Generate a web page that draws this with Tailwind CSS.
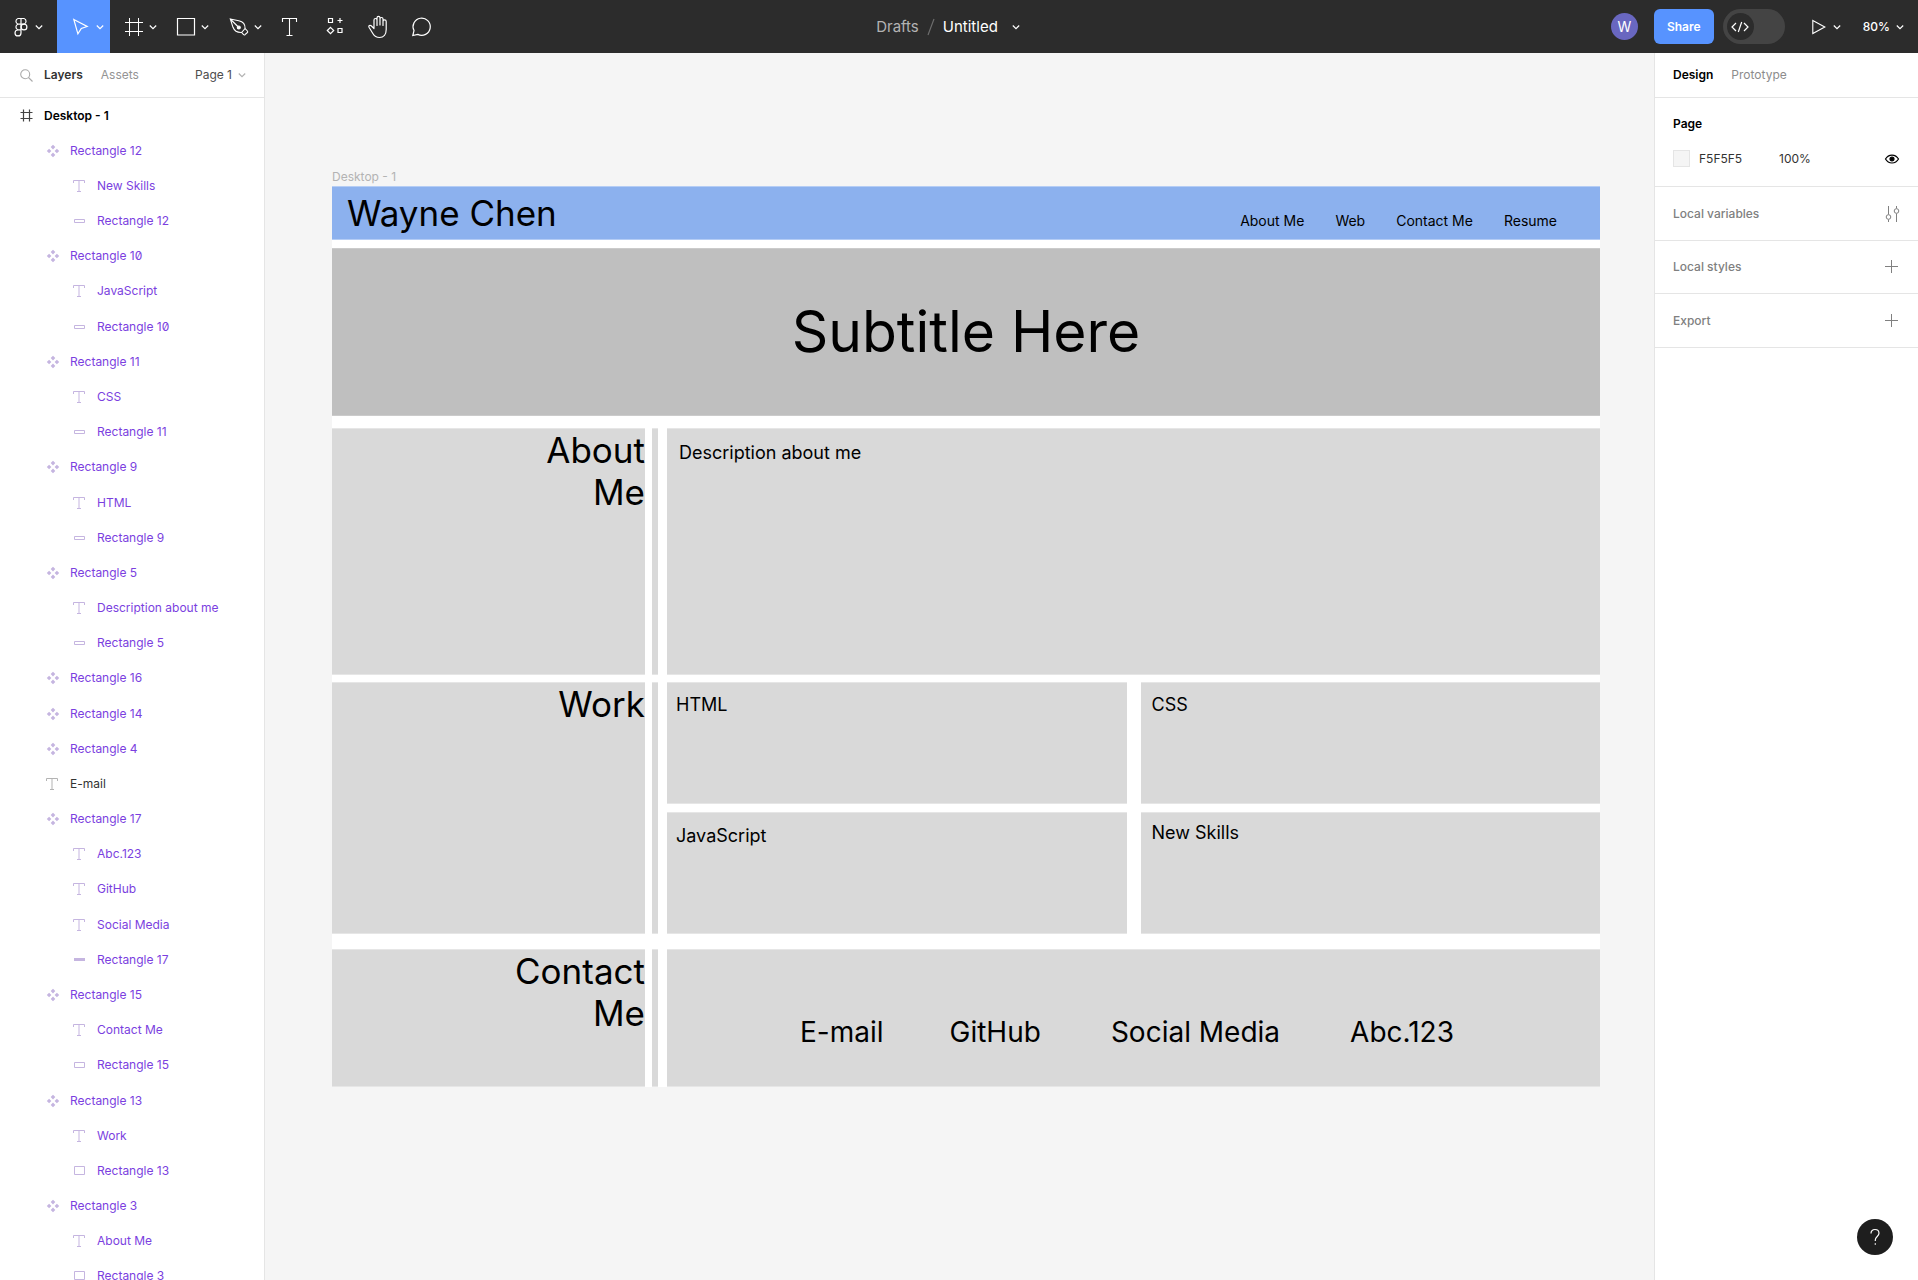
<!DOCTYPE html>
<html lang="en">
<head>
<meta charset="utf-8">
<meta name="viewport" content="width=device-width, initial-scale=1">
<title>Untitled – Drafts</title>
<script src="https://cdn.jsdelivr.net/npm/@tailwindcss/browser@4"></script>
</head>
<body class="flex h-screen flex-col overflow-hidden bg-[#f5f5f5] font-['Inter',sans-serif] text-xs leading-4 text-[#333]">

<!-- Shared icon shapes -->
<svg class="hidden" aria-hidden="true">
  <symbol id="chev" viewBox="0 0 8 8"><path d="M.8 2.500 4 5.600l3.200-3.100" fill="none" stroke="currentColor" stroke-width="1.200"/></symbol>
  <symbol id="comp" viewBox="0 0 14 14"><path d="M7 .8 9.300 3.100 7 5.400 4.700 3.100zM7 8.600l2.300 2.300L7 13.200l-2.300-2.300zM3.100 4.700 5.400 7 3.100 9.300.8 7zM10.900 4.700 13.200 7l-2.300 2.300L8.600 7z" fill="currentColor"/></symbol>
  <symbol id="text" viewBox="0 0 14 14"><path d="M.5 4V1.500h11V4M6 1.500v11M4 12.500h4" fill="none" stroke="currentColor" stroke-width="1"/></symbol>
  <symbol id="bar" viewBox="0 0 14 14"><path d="M1.500 5.500h10v3h-10z" fill="none" stroke="currentColor"/></symbol>
  <symbol id="line" viewBox="0 0 14 14"><path d="M1 5h11v3H1z" fill="currentColor"/></symbol>
  <symbol id="wide" viewBox="0 0 14 14"><path d="M1.500 4.500h10v5h-10z" fill="none" stroke="currentColor"/></symbol>
  <symbol id="box" viewBox="0 0 14 14"><path d="M1.500 2.500h10v8h-10z" fill="none" stroke="currentColor"/></symbol>
  <symbol id="plus" viewBox="0 0 14 14"><path d="M6.500 0v13M0 6.500h13" fill="none" stroke="currentColor"/></symbol>
</svg>

<header class="grid h-[53px] shrink-0 grid-cols-[1fr_auto_1fr] items-center bg-[#2c2c2c] text-white">
  <nav class="flex h-[53px]" aria-label="Tools">
    <button class="flex w-[57px] items-center justify-end gap-[2px] pr-[14px]" aria-label="Main menu">
      <svg class="size-6" viewBox="0 0 24 24" fill="none" stroke="currentColor" stroke-width="1.200"><path d="M12 3.500H9a3 3 0 0 0 0 5.700h3zM12 3.500h3a3 3 0 0 1 0 5.700h-3zM12 9.200H9a3 3 0 0 0 0 5.700h3zM12 14.900H9a3 3 0 1 0 3 3z"/><circle cx="15" cy="12" r="2.900"/></svg>
      <svg class="size-2"><use href="#chev"/></svg>
    </button>
    <button class="flex w-[53px] items-center justify-end gap-[3px] bg-[#5793ff] pr-[6px]" aria-label="Move">
      <svg class="size-6" viewBox="0 0 24 24" fill="none" stroke="currentColor" stroke-width="1.200"><path d="m4.800 4.500 13.400 7-5.900 2-3.400 5.300z"/></svg>
      <svg class="size-2"><use href="#chev"/></svg>
    </button>
    <button class="flex w-[53px] items-center justify-end gap-[3px] pr-[6px]" aria-label="Frame">
      <svg class="size-6" viewBox="0 0 24 24" fill="none" stroke="currentColor"><path d="M7.500 3v18M16.500 3v18M3 7.500h18M3 16.500h18"/></svg>
      <svg class="size-2"><use href="#chev"/></svg>
    </button>
    <button class="flex w-[53px] items-center justify-end gap-[3px] pr-[7px]" aria-label="Rectangle">
      <svg class="size-6" viewBox="0 0 24 24" fill="none" stroke="currentColor" stroke-width="1.200"><path d="M3.500 3.500h17v16.500h-17z"/></svg>
      <svg class="size-2"><use href="#chev"/></svg>
    </button>
    <button class="flex w-[53px] items-center justify-end gap-[3px] pr-[7px]" aria-label="Pen">
      <svg class="size-6" viewBox="0 0 24 24" fill="none" stroke="currentColor" stroke-width="1.100"><path d="m3.300 4 8.500 1.800c4 .9 6.500 3.800 6.300 7.700l2.300 2.500c.5.600.5 1 0 1.500L18 19.700c-.5.400-1 .4-1.400 0l-2-2.200c-4 .2-7.200-1.500-8.600-5.200zM3.300 4l7.500 7.500"/><circle cx="11.800" cy="12.500" r="1.500" fill="currentColor"/><path d="m14.600 17.500 3.500-4"/></svg>
      <svg class="size-2"><use href="#chev"/></svg>
    </button>
    <button class="flex w-11 items-center justify-center" aria-label="Text">
      <svg class="size-6" viewBox="0 0 24 24" fill="none" stroke="currentColor" stroke-width="1.100"><path d="M3.500 7V3.500h14V7M10.500 3.500v17M7.500 20.500h6"/></svg>
    </button>
    <button class="flex w-11 items-center justify-center" aria-label="Resources">
      <svg class="size-6" viewBox="0 0 24 24" fill="none" stroke="currentColor" stroke-width="1.200"><path d="M5.500 3.500h4v4h-4zM15 13.500h4v4h-4zM17 3v5M14.500 5.500h5M7.500 12.300l3.200 3.200-3.200 3.200-3.200-3.200z"/></svg>
    </button>
    <button class="flex w-11 items-center justify-center" aria-label="Hand tool">
      <svg class="size-6" viewBox="0 0 24 24" fill="none" stroke="currentColor" stroke-width="1.200" stroke-linecap="round" stroke-linejoin="round"><path d="M7 12.800V5a1.500 1.500 0 0 1 3 0v5.500M10 10V2.900a1.500 1.500 0 0 1 3 0V10M13 4a1.500 1.500 0 0 1 3 0v6.500M16 6.500a1.600 1.600 0 0 1 3.200 0v8c0 4.700-2.500 8-6.700 8-3 0-5-1-6.500-3.700l-4-6.500c-.8-1.500 1-2.600 2.200-1.500L7 13.500"/></svg>
    </button>
    <button class="flex w-11 items-center justify-center" aria-label="Comment">
      <svg class="size-6" viewBox="0 0 24 24" fill="none" stroke="currentColor" stroke-width="1.200"><path d="M1.800 20.500 3 15.600a8.600 8.600 0 1 1 3.800 3.800z"/></svg>
    </button>
  </nav>

  <div class="flex items-center pr-[22px] text-[15px] leading-5">
    <a href="#" class="text-[#b3b3b3]">Drafts</a>
    <svg class="mx-2 h-5 w-2" viewBox="0 0 8 20" fill="none" stroke="#6e6e6e" stroke-width="1.200"><path d="M7 2 1 18"/></svg>
    <button class="flex items-center gap-[14px]"><span>Untitled</span><svg class="size-2"><use href="#chev"/></svg></button>
  </div>

  <div class="flex items-center justify-end pr-[14px]">
    <span class="flex size-[27px] items-center justify-center rounded-full bg-[#6967c0] text-[14px]">W</span>
    <button class="ml-4 h-[35px] w-[60px] rounded-md bg-[#5793ff] font-semibold">Share</button>
    <button class="ml-[9px] flex h-[35px] w-[62px] items-center rounded-full bg-[#444] pl-1" role="switch" aria-checked="false" aria-label="Dev Mode">
      <span class="flex size-[27px] items-center justify-center rounded-full bg-[#2c2c2c]"><svg class="h-3 w-[18px]" viewBox="0 0 18 12" fill="none" stroke="currentColor" stroke-width="1.200"><path d="M5 2 1 6l4 4M13 2l4 4-4 4M10.700 1 7.300 11"/></svg></span>
    </button>
    <button class="ml-[27px] flex items-center gap-[7px]" aria-label="Present">
      <svg class="h-4 w-[14px]" viewBox="0 0 14 16" fill="none" stroke="currentColor" stroke-width="1.100"><path d="M.8 1.500 12.800 8 .8 14.500z"/></svg>
      <svg class="size-2"><use href="#chev"/></svg>
    </button>
    <button class="ml-[22px] flex items-center gap-[6px] font-medium"><span>80%</span><svg class="size-2"><use href="#chev"/></svg></button>
  </div>
</header>

<div class="flex min-h-0 flex-1">
  <aside class="flex w-[265px] shrink-0 flex-col border-r border-[#e5e5e5] bg-white">
    <div class="flex h-[45px] shrink-0 items-center border-b border-[#e5e5e5] pr-[18px] pl-5">
      <svg class="mr-[11px] size-[13px] text-[#aaa]" viewBox="0 0 13 13" fill="none" stroke="currentColor" stroke-width="1.100"><circle cx="5.200" cy="5.200" r="4.500"/><path d="m8.500 8.500 4 4"/></svg>
      <button class="font-semibold">Layers</button>
      <button class="ml-[18px] text-[#949494]">Assets</button>
      <button class="ml-auto flex items-center gap-[6px] text-[#4d4d4d]"><span>Page 1</span><svg class="size-2 text-[#b3b3b3]"><use href="#chev"/></svg></button>
    </div>
    <ul class="-mb-[14px] grid flex-1 auto-rows-fr text-[#7b3fe0] slashed-zero [&_svg]:size-[14px] [&_svg]:shrink-0 [&_svg]:text-[#c5b5e0] [&>li]:flex [&>li]:items-center [&>li]:gap-[10px]">
      <li class="pl-5 font-semibold text-black"><svg class="!text-[#444]" viewBox="0 0 14 14" fill="none" stroke="currentColor" stroke-width="1.200"><path d="M3.500.5v12M9.500.5v12M.5 3.500h12M.5 9.500h12"/></svg>Desktop - 1</li>
      <li class="pl-[46px]"><svg><use href="#comp"/></svg>Rectangle 12</li>
      <li class="pl-[73px]"><svg><use href="#text"/></svg>New Skills</li>
      <li class="pl-[73px]"><svg><use href="#bar"/></svg>Rectangle 12</li>
      <li class="pl-[46px]"><svg><use href="#comp"/></svg>Rectangle 10</li>
      <li class="pl-[73px]"><svg><use href="#text"/></svg>JavaScript</li>
      <li class="pl-[73px]"><svg><use href="#bar"/></svg>Rectangle 10</li>
      <li class="pl-[46px]"><svg><use href="#comp"/></svg>Rectangle 11</li>
      <li class="pl-[73px]"><svg><use href="#text"/></svg>CSS</li>
      <li class="pl-[73px]"><svg><use href="#bar"/></svg>Rectangle 11</li>
      <li class="pl-[46px]"><svg><use href="#comp"/></svg>Rectangle 9</li>
      <li class="pl-[73px]"><svg><use href="#text"/></svg>HTML</li>
      <li class="pl-[73px]"><svg><use href="#bar"/></svg>Rectangle 9</li>
      <li class="pl-[46px]"><svg><use href="#comp"/></svg>Rectangle 5</li>
      <li class="pl-[73px]"><svg><use href="#text"/></svg>Description about me</li>
      <li class="pl-[73px]"><svg><use href="#bar"/></svg>Rectangle 5</li>
      <li class="pl-[46px]"><svg><use href="#comp"/></svg>Rectangle 16</li>
      <li class="pl-[46px]"><svg><use href="#comp"/></svg>Rectangle 14</li>
      <li class="pl-[46px]"><svg><use href="#comp"/></svg>Rectangle 4</li>
      <li class="pl-[46px] text-[#333]"><svg class="!text-[#b3b3b3]"><use href="#text"/></svg>E-mail</li>
      <li class="pl-[46px]"><svg><use href="#comp"/></svg>Rectangle 17</li>
      <li class="pl-[73px]"><svg><use href="#text"/></svg>Abc.123</li>
      <li class="pl-[73px]"><svg><use href="#text"/></svg>GitHub</li>
      <li class="pl-[73px]"><svg><use href="#text"/></svg>Social Media</li>
      <li class="pl-[73px]"><svg><use href="#line"/></svg>Rectangle 17</li>
      <li class="pl-[46px]"><svg><use href="#comp"/></svg>Rectangle 15</li>
      <li class="pl-[73px]"><svg><use href="#text"/></svg>Contact Me</li>
      <li class="pl-[73px]"><svg><use href="#wide"/></svg>Rectangle 15</li>
      <li class="pl-[46px]"><svg><use href="#comp"/></svg>Rectangle 13</li>
      <li class="pl-[73px]"><svg><use href="#text"/></svg>Work</li>
      <li class="pl-[73px]"><svg><use href="#box"/></svg>Rectangle 13</li>
      <li class="pl-[46px]"><svg><use href="#comp"/></svg>Rectangle 3</li>
      <li class="pl-[73px]"><svg><use href="#text"/></svg>About Me</li>
      <li class="pl-[73px]"><svg><use href="#box"/></svg>Rectangle 3</li>
    </ul>
  </aside>

  <main class="min-w-0 flex-1 pt-[116px] pr-[54px] pl-[67px] text-black">
    <p class="mb-px text-[#b3b3b3]">Desktop - 1</p>
    <!-- Artboard -->
    <article class="bg-white">
      <header class="flex h-[54px] items-center justify-between border-y border-[#b5cdf5] bg-[#8cb1ee] pr-[43px] pl-[15px]">
        <h1 class="text-[35px] leading-[42px]">Wayne Chen</h1>
        <nav class="flex gap-[31px] self-end pb-2 text-[14px] leading-5"><a href="#">About Me</a><a href="#">Web</a><a href="#">Contact Me</a><a href="#">Resume</a></nav>
      </header>
      <section class="mt-2 flex h-[168px] items-center justify-center border-y border-[#cbcbcb] bg-[#bfbfbf]">
        <h2 class="text-[57px] leading-[68px]">Subtitle Here</h2>
      </section>
      <section class="mt-3 flex h-[247px] [&>*]:border-y [&>*]:border-[#e6e6e6] [&>*]:bg-[#d9d9d9]">
        <h3 class="w-[313px] text-right text-[35px] leading-[42px]">About<br>Me</h3>
        <div class="mr-[9px] ml-[7px] w-[6px]"></div>
        <p class="flex-1 pt-[13px] pl-3 text-[18px] leading-[22px]">Description about me</p>
      </section>
      <section class="mt-[7px] flex h-[252px]">
        <h3 class="w-[313px] border-y border-[#e6e6e6] bg-[#d9d9d9] text-right text-[35px] leading-[42px]">Work</h3>
        <div class="mr-[9px] ml-[7px] w-[6px] border-y border-[#e6e6e6] bg-[#d9d9d9]"></div>
        <div class="grid flex-1 grid-cols-2 grid-rows-2 gap-x-[14px] gap-y-2 text-[18px] leading-[22px] [&>*]:border-y [&>*]:border-[#e6e6e6] [&>*]:bg-[#d9d9d9]">
          <p class="pt-[11px] pl-[9px]">HTML</p>
          <p class="pt-[11px] pl-[11px]">CSS</p>
          <p class="pt-3 pl-[9px]">JavaScript</p>
          <p class="pt-[9px] pl-[11px]">New Skills</p>
        </div>
      </section>
      <section class="mt-[15px] flex h-[138px] [&>*]:border-y [&>*]:border-[#e6e6e6] [&>*]:bg-[#d9d9d9]">
        <h3 class="w-[313px] text-right text-[35px] leading-[42px]">Contact<br>Me</h3>
        <div class="mr-[9px] ml-[7px] w-[6px]"></div>
        <div class="flex flex-1 gap-[70px] pt-[65px] pl-[133px] text-[28px] leading-[34px]"><a href="#" class="-mr-1">E-mail</a><a href="#">GitHub</a><a href="#">Social Media</a><a href="#">Abc.123</a></div>
      </section>
    </article>
  </main>

  <aside class="w-[264px] shrink-0 border-l border-[#e5e5e5] bg-white [&>*]:border-b [&>*]:border-[#e5e5e5] [&>*]:px-[18px]">
    <div class="flex h-[45px] items-center gap-[18px]"><button class="font-semibold text-black">Design</button><button class="text-[#8c8c8c]">Prototype</button></div>
    <section class="h-[89px] pt-[18px]">
      <h2 class="font-semibold text-black">Page</h2>
      <div class="mt-[18px] flex items-center">
        <button class="size-[17px] border border-[#e5e5e5] bg-[#f5f5f5]" aria-label="Page colour"></button>
        <input class="ml-[9px] w-20 outline-none" aria-label="Hex" value="F5F5F5">
        <input class="w-16 outline-none" aria-label="Opacity" value="100%">
        <button class="ml-auto" aria-label="Toggle visibility"><svg class="h-[10px] w-4 text-black" viewBox="0 0 16 10" fill="none" stroke="currentColor" stroke-width="1.200"><path d="M1.500 5C4.500-.3 11.500-.3 14.500 5c-3 5.300-10 5.300-13 0z"/><circle cx="8" cy="5" r="2" fill="currentColor"/></svg></button>
      </div>
    </section>
    <section class="flex h-[54px] items-center justify-between font-medium text-[#808080]"><h2>Local variables</h2><button aria-label="Open variables"><svg class="h-[18px] w-4" viewBox="0 0 16 18" fill="none" stroke="currentColor"><path d="M4.500 1v8.500M4.500 14.500V17M12.500 1v2.500M12.500 8.500V17"/><circle cx="4.500" cy="12" r="2.300"/><circle cx="12.500" cy="6" r="2.300"/></svg></button></section>
    <section class="flex h-[53px] items-center justify-between font-medium text-[#808080]"><h2>Local styles</h2><button aria-label="Add style"><svg class="size-[14px] mr-px"><use href="#plus"/></svg></button></section>
    <section class="flex h-[54px] items-center justify-between font-medium text-[#808080]"><h2>Export</h2><button aria-label="Add export"><svg class="size-[14px] mr-px"><use href="#plus"/></svg></button></section>
  </aside>
</div>

<button class="fixed right-[25px] bottom-[25px] flex size-9 items-center justify-center rounded-full bg-[#1e1e1e] text-white" aria-label="Help">
  <svg class="h-[18px] w-3" viewBox="0 0 12 18" fill="none" stroke="currentColor" stroke-width="1.200"><path d="M2 5.500C2 3 3.500 1.500 6 1.500s4 1.500 4 3.800C10 8.500 6.300 8.500 6.300 12v1M6.300 15.300v1.500"/></svg>
</button>
</body>
</html>
